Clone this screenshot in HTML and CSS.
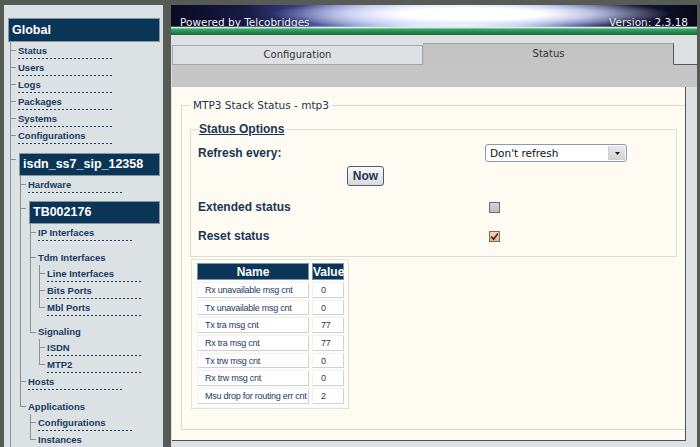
FILE: index.html
```html
<!DOCTYPE html>
<html lang="en">
<head>
    <meta charset="UTF-8">
    <title>MTP3 Stack Status</title>
    <link rel="stylesheet" href="styles.css">
</head>
<body>
    <!-- Navigation tree -->
    <div class="sidebar">
        <div class="node-title global">Global</div>
        <ul class="tree full">
            <li><a href="#">Status</a></li>
            <li><a href="#">Users</a></li>
            <li><a href="#">Logs</a></li>
            <li><a href="#">Packages</a></li>
            <li><a href="#">Systems</a></li>
            <li><a href="#">Configurations</a></li>
            <li class="dev">
                <div class="node-title">isdn_ss7_sip_12358</div>
                <ul class="tree full">
                    <li><a href="#">Hardware</a></li>
                    <li class="dev">
                        <div class="node-title">TB002176</div>
                        <ul class="tree">
                            <li><a href="#">IP Interfaces</a></li>
                            <li class="folder">
                                <span class="label">Tdm Interfaces</span>
                                <ul class="tree sub">
                                    <li><a href="#">Line Interfaces</a></li>
                                    <li><a href="#">Bits Ports</a></li>
                                    <li><a href="#">Mbl Ports</a></li>
                                </ul>
                            </li>
                            <li class="folder">
                                <span class="label">Signaling</span>
                                <ul class="tree sub">
                                    <li><a href="#">ISDN</a></li>
                                    <li><a href="#">MTP2</a></li>
                                </ul>
                            </li>
                        </ul>
                    </li>
                    <li><a href="#">Hosts</a></li>
                    <li class="folder">
                        <span class="label">Applications</span>
                        <ul class="tree">
                            <li><a href="#">Configurations</a></li>
                            <li><a href="#">Instances</a></li>
                        </ul>
                    </li>
                </ul>
            </li>
        </ul>
    </div>

    <div class="main">
        <div class="banner">
            <span>Powered by Telcobridges</span>
            <span>Version: 2.3.18</span>
        </div>

        <div class="tabs">
            <div class="tab">Configuration</div>
            <div class="tab active">Status</div>
            <div class="tab-rest"></div>
        </div>
        <div class="graybar"></div>

        <div class="frame">
            <fieldset class="outer">
                <legend>MTP3 Stack Status - mtp3</legend>

                <fieldset class="options">
                    <legend>Status Options</legend>
                    <div class="opts">
                        <div class="lbl">Refresh every:</div>
                        <div class="select">
                            <span>Don't refresh</span>
                            <span class="arrow"><svg width="5" height="3" viewBox="0 0 5 3"><path d="M0 0H5L2.5 3Z" fill="#111"/></svg></span>
                        </div>

                        <button class="now">Now</button>

                        <div class="lbl">Extended status</div>
                        <div class="check"></div>

                        <div class="lbl">Reset status</div>
                        <div class="check on">
                            <svg width="9" height="9" viewBox="0 0 9 9"><path d="M1.3 4.6L3.6 7.2L7.9 1.4" fill="none" stroke="#3d2410" stroke-width="1.6"/></svg>
                        </div>
                    </div>
                </fieldset>

                <div class="stats">
                    <table>
                        <tr><th class="c-name">Name</th><th class="c-val">Value</th></tr>
                        <tr><td>Rx unavailable msg cnt</td><td class="v">0</td></tr>
                        <tr><td>Tx unavailable msg cnt</td><td class="v">0</td></tr>
                        <tr><td>Tx tra msg cnt</td><td class="v">77</td></tr>
                        <tr><td>Rx tra msg cnt</td><td class="v">77</td></tr>
                        <tr><td>Tx trw msg cnt</td><td class="v">0</td></tr>
                        <tr><td>Rx trw msg cnt</td><td class="v">0</td></tr>
                        <tr><td>Msu drop for routing err cnt</td><td class="v">2</td></tr>
                    </table>
                </div>
            </fieldset>
        </div>
    </div>
</body>
</html>
```

FILE: styles.css
```css
* {
    box-sizing: border-box;
}

body {
    margin: 0;
    width: 700px;
    height: 447px;
    overflow: hidden;
    background-color: #575b55;
    display: flex;
    align-items: flex-start;
    padding: 5px 0 0 4px;
    font-family: "Liberation Sans", Arial, sans-serif;
}

/* ---- sidebar tree ---- */

.sidebar {
    width: 159px;
    height: 442px;
    background-color: #dce1e4;
    padding: 13px 3px 0 4px;
    overflow: hidden;
}

.node-title {
    display: block;
    height: 23px;
    line-height: 21px;
    padding-left: 3px;
    background-color: #0b3556;
    border: 1px solid #8796a2;
    color: #ffffff;
    font-weight: bold;
    font-size: 12.5px;
}

.node-title.global {
    height: 24px;
    line-height: 22px;
}

.dev > .node-title {
    margin-left: 1px;
}

.tree {
    list-style: none;
    margin: 0 0 0 2px;
    padding: 0;
}

.tree.sub {
    margin-left: 1px;
}

.tree li {
    position: relative;
    padding-left: 8px;
}

.tree li::before {
    content: "";
    position: absolute;
    left: 0;
    top: 0;
    bottom: 0;
    border-left: 1px solid #8b9094;
}

.tree li::after {
    content: "";
    position: absolute;
    left: 0;
    top: 8px;
    width: 6px;
    border-top: 1px solid #8b9094;
}

.tree li:last-child::before {
    bottom: auto;
    height: 9px;
}

.tree.full > li:last-child::before {
    bottom: 0;
    height: auto;
}

.tree li.dev,
.tree li.folder {
    padding-top: 8.5px;
}

.tree li.dev::after {
    top: 15px;
}

.tree li.folder::after {
    top: 16px;
}

.tree li.folder:last-child::before {
    height: 17px;
}

.tree a {
    display: block;
    width: 96px;
    height: 17px;
    padding-top: 3px;
    line-height: 11px;
    font-size: 9.5px;
    font-weight: bold;
    color: #163a5f;
    text-decoration: none;
    background: repeating-linear-gradient(to right, #1f3d5e 0 2px, transparent 2px 4px) left bottom / 100% 1px no-repeat;
}

.tree .label {
    display: block;
    height: 15px;
    line-height: 15px;
    font-size: 9.5px;
    font-weight: bold;
    color: #163a5f;
}

/* ---- main area ---- */

.main {
    margin-left: 8px;
    width: 526px;
    height: 442px;
    background-color: #dde1e3;
    overflow: hidden;
}

.banner {
    height: 30px;
    display: flex;
    justify-content: space-between;
    align-items: center;
    padding: 3px 9px 0;
    color: #eef0f6;
    font-family: "DejaVu Sans", sans-serif;
    font-size: 10.5px;
    text-shadow: 0 0 2px rgba(0, 0, 30, 0.7);
    background-color: #101236;
    background-image:
        linear-gradient(180deg, transparent 70%, #d2f0e1 75%, #3aa567 81%, #23824a 92%, #1a6b3c 100%),
        radial-gradient(200px 16px at 300px 9px, #ffffff 0%, #ffffff 35%, rgba(225, 230, 255, 0.8) 60%, rgba(150, 160, 220, 0) 100%),
        linear-gradient(90deg, #0a0a22 0%, #171a44 14%, #3a4286 25%, #8c96d0 35%, #dfe5ff 46%, #ffffff 56%, #b8c0ec 66%, #4a5296 76%, #141638 87%, #08081a 100%);
}

.tabs {
    display: flex;
    align-items: flex-end;
    height: 30px;
    padding-left: 1px;
}

.tab {
    width: 251px;
    height: 20px;
    border: 1px solid #a4a7a9;
    background-color: #dde1e3;
    color: #333;
    font-family: "DejaVu Sans", sans-serif;
    font-size: 10px;
    line-height: 18px;
    text-align: center;
}

.tab.active {
    height: 22px;
    line-height: 20px;
    background-color: #c4c4c4;
    border-color: #a0a0a0 #555 #c4c4c4 #b8b8b8;
}

.tab-rest {
    flex: 1;
    height: 1px;
    background-color: #555;
}

.graybar {
    height: 22px;
    margin-left: 1px;
    background-color: #c6c6c6;
}

.frame {
    margin-left: 1px;
    width: 514px;
    height: 354px;
    padding: 12px 11px 0 9px;
    background-color: #fefcf2;
    border-right: 1px solid #4f4f4f;
    border-bottom: 1px solid #4f4f4f;
    overflow: hidden;
}

fieldset.outer {
    margin: 0;
    padding: 0 8px 20px;
    border: 1px solid #d9d9cf;
}

.outer > legend {
    padding: 0 3px;
    font-family: "DejaVu Sans", sans-serif;
    font-size: 10.5px;
    line-height: 13px;
    color: #22344c;
}

fieldset.options {
    margin: 10px 0 0;
    width: 487px;
    padding: 6px 7px 10px;
    border: 1px solid #ddddd3;
}

.options > legend {
    padding: 0 2px 0 1px;
    font-size: 12px;
    line-height: 14px;
    font-weight: bold;
    text-decoration: underline;
    color: #1b3554;
}

.opts {
    display: grid;
    grid-template-columns: 149px 138px 1fr;
    grid-template-rows: 22px 24px 38px 20px;
    align-items: center;
}

.lbl {
    grid-column: 1 / 3;
    font-size: 12px;
    font-weight: bold;
    color: #1b3554;
}

.select {
    width: 142px;
    height: 18px;
    display: flex;
    align-items: center;
    justify-content: space-between;
    padding-left: 4px;
    background-color: #ffffff;
    border: 1px solid #7f9db9;
    border-radius: 3px;
    font-family: "DejaVu Sans", sans-serif;
    font-size: 10.5px;
    color: #111;
}

.select .arrow {
    width: 17px;
    height: 14px;
    margin-right: 1px;
    display: flex;
    align-items: center;
    justify-content: center;
    background: linear-gradient(#e8e8e8, #d0d0d0);
    border-left: 1px solid #cfcfcf;
}

.now {
    grid-column: 2;
    justify-self: start;
    width: 37px;
    height: 20px;
    padding: 0;
    background: linear-gradient(#fafafa, #dadada);
    border: 1px solid #4d5d70;
    border-radius: 3px;
    font-family: "Liberation Sans", Arial, sans-serif;
    font-size: 12px;
    font-weight: bold;
    color: #1f3550;
}

.check {
    width: 11px;
    height: 11px;
    margin-left: 4px;
    border: 1px solid #6d6d6d;
    background: linear-gradient(#d6d6d6, #bdbdbd);
    display: flex;
    align-items: center;
    justify-content: center;
}

.check.on {
    background: linear-gradient(#fbd2b0, #f1b184);
}

/* ---- counters table ---- */

.stats {
    width: 158px;
    margin: 2px 0 0 1px;
    padding: 1px 1px 2px 2px;
    background-color: #fdfcf6;
    border: 1px solid #e2e2da;
}

.stats table {
    width: 153px;
    table-layout: fixed;
    border-spacing: 3px 2px;
}

.stats th {
    height: 17px;
    padding: 0;
    background-color: #0b3556;
    border: 1px solid #7f93a3;
    color: #ffffff;
    font-size: 12px;
    font-weight: bold;
    text-align: center;
    white-space: nowrap;
}

.stats .c-name {
    width: 112px;
}

.stats .c-val {
    width: 32px;
}

.stats td {
    height: 15.7px;
    padding: 0 0 0 7px;
    background-color: #ffffff;
    border: 1px solid;
    border-color: #f2f2f2 #d2d2d2 #d2d2d2 #f2f2f2;
    color: #1e3a5a;
    font-size: 9px;
    letter-spacing: -0.25px;
    white-space: nowrap;
}

.stats td.v {
    padding-left: 8px;
}
```
